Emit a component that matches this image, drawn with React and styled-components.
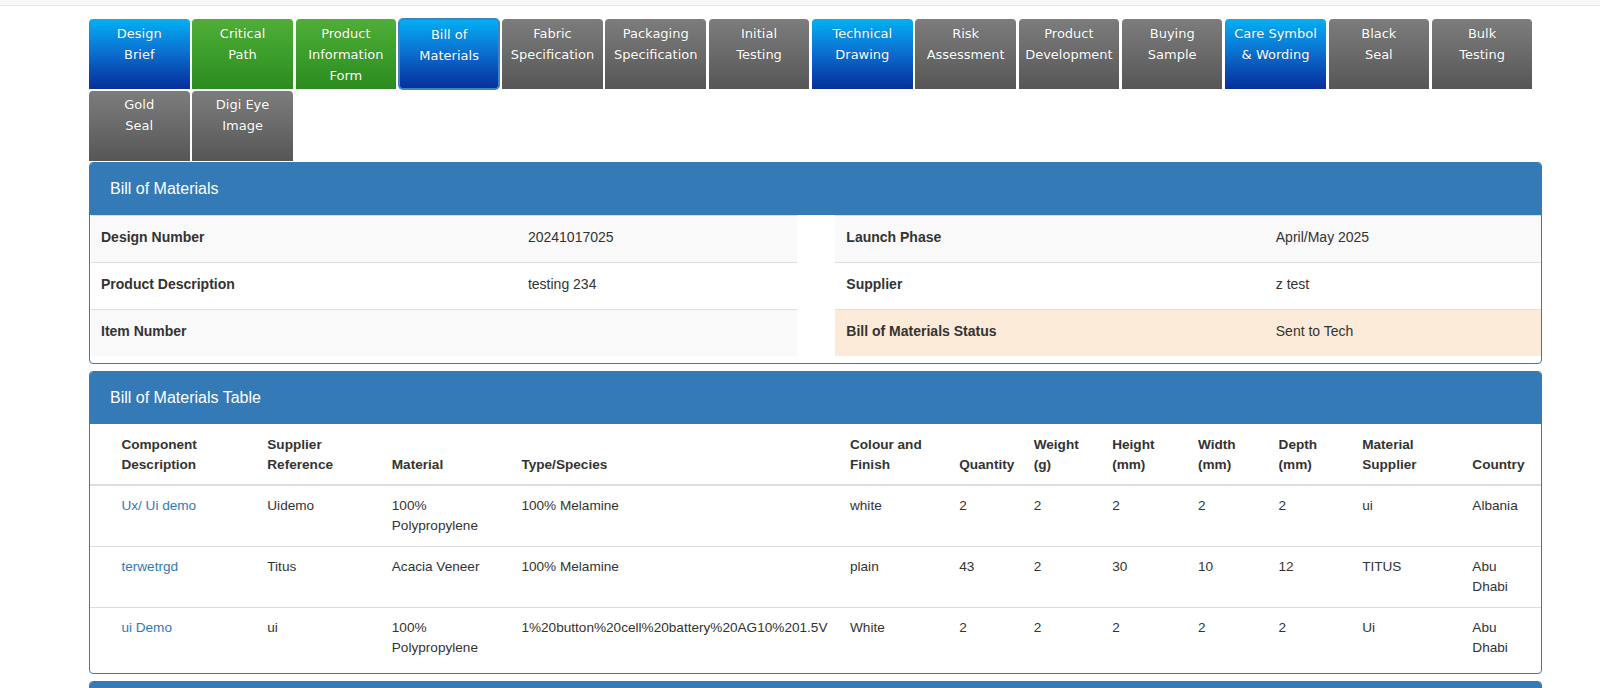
import React from "react";
import styled, { createGlobalStyle, css } from "styled-components";

const GlobalStyle = createGlobalStyle`
  html, body { margin: 0; padding: 0; background: #fff; }
  body {
    font-family: "Liberation Sans", Arial, Helvetica, sans-serif;
    color: #333;
    font-size: 14px;
  }
  * { box-sizing: border-box; }
`;

const TopBar = styled.div`
  height: 6px;
  background: #f8f8f8;
  border-bottom: 1px solid #e6e6e6;
`;

const Container = styled.div`
  margin-left: 89px;
  width: 1453px;
  padding-top: 13px;
`;

const TabStrip = styled.nav`
  display: flex;
  flex-wrap: wrap;
  column-gap: 2.8px;
  row-gap: 1.5px;
`;

const tones = {
  blue: css`
    background: linear-gradient(to bottom, #02b0f3 0%, #0a7ad6 40%, #0848b0 78%, #06309a 100%);
  `,
  green: css`
    background: linear-gradient(to bottom, #4eae37 0%, #3c9e2b 50%, #2b8b20 100%);
  `,
  gray: css`
    background: linear-gradient(to bottom, #7c7c7c 0%, #6a6a6a 50%, #565656 100%);
  `,
};

const Tab = styled.a`
  display: block;
  width: 100.5px;
  height: 70px;
  padding-top: ${(p) => (p.$active ? 5 : 3.5)}px;
  border-radius: 4px 4px 0 0;
  font-family: "DejaVu Sans", Verdana, sans-serif;
  font-size: 13px;
  line-height: 21px;
  color: #fff;
  text-align: center;
  text-decoration: none;
  text-shadow: 0 0 1px rgba(0, 0, 0, 0.25);
  cursor: pointer;
  ${(p) => tones[p.$tone]}
  ${(p) =>
    p.$active &&
    css`
      border-radius: 4px;
      box-shadow: 0 0 0 1px #3f82c6, inset 0 0 0 1px #3f82c6;
    `}
`;

const Panel = styled.section`
  border: 1px solid #337ab7;
  border-radius: 4px;
  margin-top: ${(p) => p.$top || 0}px;
  overflow: hidden;
  background: #fff;
`;

const PanelHeading = styled.div`
  height: 52px;
  background: #337ab7;
  color: #fff;
  display: flex;
  align-items: center;
  padding: 0 20px;
  font-size: 16px;
`;

const InfoBody = styled.div`
  display: flex;
  gap: 38.7px;
  padding: 0 0 6.5px 1px;
`;

const InfoTable = styled.table`
  flex: 1;
  border-collapse: collapse;
  table-layout: fixed;
  font-size: 14px;
`;

const InfoRow = styled.tr`
  background: ${(p) => (p.$tone === "warn" ? "#fcebd8" : p.$striped ? "#f9f9f9" : "#fff")};
`;

const InfoCell = styled.td`
  padding: 11px 10px 15px ${(p) => p.$padLeft || 10}px;
  line-height: 20px;
  border-top: 1px solid #ddd;
  font-weight: ${(p) => (p.$label ? 700 : 400)};
  width: ${(p) => p.$width || "auto"};
  vertical-align: top;
`;

const TableBody = styled.div`
  padding-bottom: 5px;
`;

const DataTable = styled.table`
  width: 100%;
  border-collapse: collapse;
  table-layout: fixed;
  font-size: 13.6px;
`;

const Th = styled.th`
  text-align: left;
  vertical-align: bottom;
  font-weight: 700;
  line-height: 20px;
  padding: 11px 10px 9px ${(p) => (p.$first ? 31.4 : 10)}px;
  border-bottom: 2px solid #ddd;
`;

const Td = styled.td`
  vertical-align: top;
  line-height: 20px;
  padding: 10px 10px 10px ${(p) => (p.$first ? 31.4 : 10)}px;
  border-top: 1px solid #ddd;
  white-space: ${(p) => (p.$nowrap ? "nowrap" : "normal")};
`;

const Link = styled.a`
  color: #337ab7;
  text-decoration: none;
`;

const tabs = [
  { lines: ["Design", "Brief"], tone: "blue" },
  { lines: ["Critical", "Path"], tone: "green" },
  { lines: ["Product", "Information", "Form"], tone: "green" },
  { lines: ["Bill of", "Materials"], tone: "blue", active: true },
  { lines: ["Fabric", "Specification"], tone: "gray" },
  { lines: ["Packaging", "Specification"], tone: "gray" },
  { lines: ["Initial", "Testing"], tone: "gray" },
  { lines: ["Technical", "Drawing"], tone: "blue" },
  { lines: ["Risk", "Assessment"], tone: "gray" },
  { lines: ["Product", "Development"], tone: "gray" },
  { lines: ["Buying", "Sample"], tone: "gray" },
  { lines: ["Care Symbol", "& Wording"], tone: "blue" },
  { lines: ["Black", "Seal"], tone: "gray" },
  { lines: ["Bulk", "Testing"], tone: "gray" },
  { lines: ["Gold", "Seal"], tone: "gray" },
  { lines: ["Digi Eye", "Image"], tone: "gray" },
];

const leftInfo = [
  ["Design Number", "20241017025"],
  ["Product Description", "testing 234"],
  ["Item Number", ""],
];

const rightInfo = [
  ["Launch Phase", "April/May 2025"],
  ["Supplier", "z test"],
  ["Bill of Materials Status", "Sent to Tech", "warn"],
];

const columns = [
  { label: ["Component", "Description"], width: 167.3 },
  { label: ["Supplier", "Reference"], width: 124.5 },
  { label: ["Material"], width: 129.6 },
  { label: ["Type/Species"], width: 328.6 },
  { label: ["Colour and", "Finish"], width: 109.2 },
  { label: ["Quantity"], width: 74.5 },
  { label: ["Weight", "(g)"], width: 78.5 },
  { label: ["Height", "(mm)"], width: 85.8 },
  { label: ["Width", "(mm)"], width: 80.6 },
  { label: ["Depth", "(mm)"], width: 83.6 },
  { label: ["Material", "Supplier"], width: 110.2 },
  { label: ["Country"], width: 78.6 },
];

const rows = [
  ["Ux/ Ui demo", "Uidemo", "100% Polypropylene", "100% Melamine", "white", "2", "2", "2", "2", "2", "ui", "Albania"],
  ["terwetrgd", "Titus", "Acacia Veneer", "100% Melamine", "plain", "43", "2", "30", "10", "12", "TITUS", "Abu Dhabi"],
  ["ui Demo", "ui", "100% Polypropylene", "1%20button%20cell%20battery%20AG10%201.5V", "White", "2", "2", "2", "2", "2", "Ui", "Abu Dhabi"],
];

function Info({ items, labelWidth, padLeft }) {
  return (
    <InfoTable>
      <tbody>
        {items.map(([label, value, tone], i) => (
          <InfoRow key={label} $striped={i % 2 === 0} $tone={tone}>
            <InfoCell $label $width={labelWidth} $padLeft={padLeft}>
              {label}
            </InfoCell>
            <InfoCell>{value}</InfoCell>
          </InfoRow>
        ))}
      </tbody>
    </InfoTable>
  );
}

export default function App() {
  return (
    <>
      <GlobalStyle />
      <TopBar />
      <Container>
        <TabStrip>
          {tabs.map((t, i) => (
            <Tab key={i} $tone={t.tone} $active={t.active}>
              {t.lines.map((l, j) => (
                <React.Fragment key={j}>
                  {j > 0 && <br />}
                  {l}
                </React.Fragment>
              ))}
            </Tab>
          ))}
        </TabStrip>

        <Panel $top={1.5}>
          <PanelHeading>Bill of Materials</PanelHeading>
          <InfoBody>
            <Info items={leftInfo} labelWidth="60.5%" />
            <Info items={rightInfo} labelWidth="61%" padLeft={11} />
          </InfoBody>
        </Panel>

        <Panel $top={7}>
          <PanelHeading>Bill of Materials Table</PanelHeading>
          <TableBody>
            <DataTable>
              <colgroup>
                {columns.map((c, i) => (
                  <col key={i} style={{ width: `${c.width}px` }} />
                ))}
              </colgroup>
              <thead>
                <tr>
                  {columns.map((c, i) => (
                    <Th key={i} $first={i === 0}>
                      {c.label.map((l, j) => (
                        <React.Fragment key={j}>
                          {j > 0 && <br />}
                          {l}
                        </React.Fragment>
                      ))}
                    </Th>
                  ))}
                </tr>
              </thead>
              <tbody>
                {rows.map((r, i) => (
                  <tr key={i}>
                    {r.map((cell, j) => (
                      <Td key={j} $first={j === 0} $nowrap={j === 3}>
                        {j === 0 ? <Link>{cell}</Link> : cell}
                      </Td>
                    ))}
                  </tr>
                ))}
              </tbody>
            </DataTable>
          </TableBody>
        </Panel>

        <Panel $top={7}>
          <PanelHeading />
        </Panel>
      </Container>
    </>
  );
}
